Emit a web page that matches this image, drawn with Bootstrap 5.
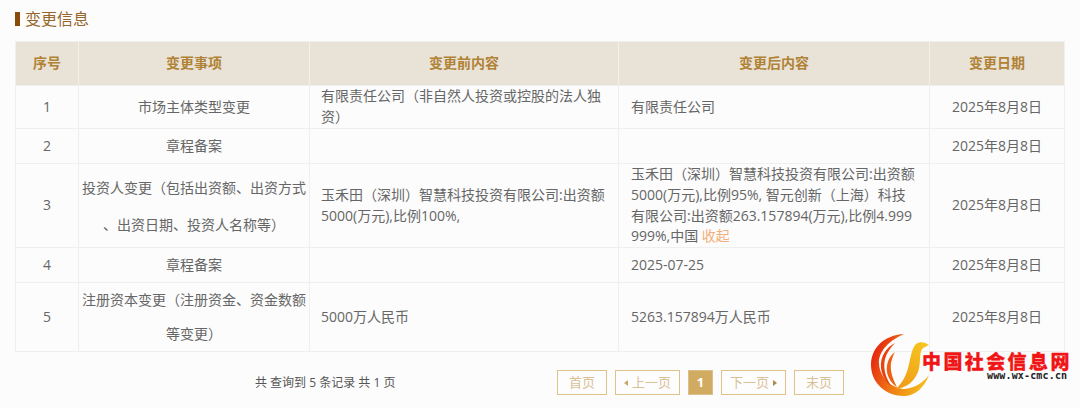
<!DOCTYPE html>
<html lang="zh">
<head>
<meta charset="utf-8">
<title>变更信息</title>
<link rel="stylesheet" href="https://cdn.jsdelivr.net/npm/bootstrap@5.3.0/dist/css/bootstrap.min.css">
<style>
html,body{height:408px;overflow:hidden}
body{background:#fcfcfc;color:#666;font-family:"Open Sans","Noto Sans CJK SC",sans-serif;font-size:14px;position:relative}
.page-wrap{padding:9px 15px 0}
.sec-title{display:flex;align-items:center;height:20px;margin:0 0 12px;color:#96672b;font-size:16px;font-weight:400;line-height:20px}
.sec-title::before{content:"";width:5px;height:14px;background:#8b4a08;margin-right:5px}
.chg-table{width:1049px;table-layout:fixed;margin:0;--bs-table-bg:transparent;--bs-table-color:#666;border-color:#efefef;font-size:14px;line-height:20.75px;word-break:break-all;line-break:anywhere}
.chg-table>thead>tr>th{background:#e9e2d7;color:#b08235;font-weight:700;text-align:center;vertical-align:middle;height:44px;padding:0 2px;border-color:#f3efe9;box-shadow:none}
.chg-table>tbody>tr>td{vertical-align:middle;padding:0 12px 0 12px;box-shadow:none}
.chg-table>tbody>tr>td.ctr{text-align:center;padding:0 3px}
.chg-table>tbody>tr>td.before-cell{padding-left:11px;padding-right:13px}
.chg-table>tbody>tr>td.lh37{line-height:37px}
.chg-table>tbody>tr>td.lh34{line-height:34px}
.c1{width:63px}.c2{width:231px}.c3{width:309px}.c4{width:311px}.c5{width:135px}
.h1r{height:43px}.h2r{height:35px}.h3r{height:84px}.h4r{height:35px}.h5r{height:69px}
.fold{color:#f6ae78;text-decoration:none}
.pager-row{display:flex;align-items:center;height:25px;margin-top:18px}
.pager-info{width:542px;padding-left:240px;color:#555;font-size:12px;white-space:nowrap}
.pgs{display:flex;gap:8px}
.pg{display:flex;align-items:center;justify-content:center;height:25px;border:1px solid #dfc288;color:#d8c194;font-size:13px;text-decoration:none;background:#fdfdfd}
.pg.w1{width:50px}.pg.w2{width:65px}.pg.on{width:25px;background:#d1ab62;border-color:#dcc08c;color:#fff;font-weight:700}
.tri-l,.tri-r{display:inline-block;width:0;height:0;border-top:3px solid transparent;border-bottom:3px solid transparent}
.tri-l{border-right:4px solid #c9a86c;margin-right:4px}
.tri-r{border-left:4px solid #a9894f;margin-left:4px}
.wm{position:absolute;left:868px;top:332px;width:208px;height:76px}
.wm-cn{position:absolute;left:54px;top:19px;color:#f01616;font-family:"Noto Sans CJK SC",sans-serif;font-size:19px;font-weight:900;line-height:20px;letter-spacing:2.4px;white-space:nowrap;-webkit-text-stroke:.3px #f01616}
.wm-url{position:absolute;left:119px;top:39px;color:#222;font-family:"DejaVu Sans Mono",monospace;font-size:10px;font-weight:700;line-height:10px;white-space:nowrap;letter-spacing:.15px}
.wm svg{position:absolute;left:0;top:0}
</style>
</head>
<body>
<div class="page-wrap">
  <h2 class="sec-title">变更信息</h2>
  <table class="table table-bordered chg-table">
    <colgroup><col class="c1"><col class="c2"><col class="c3"><col class="c4"><col class="c5"></colgroup>
    <thead>
      <tr><th>序号</th><th>变更事项</th><th>变更前内容</th><th>变更后内容</th><th>变更日期</th></tr>
    </thead>
    <tbody>
      <tr class="h1r"><td class="ctr">1</td><td class="ctr">市场主体类型变更</td><td class="before-cell">有限责任公司（非自然人投资或控股的法人独资）</td><td>有限责任公司</td><td class="ctr">2025年8月8日</td></tr>
      <tr class="h2r"><td class="ctr">2</td><td class="ctr">章程备案</td><td class="before-cell"></td><td></td><td class="ctr">2025年8月8日</td></tr>
      <tr class="h3r"><td class="ctr">3</td><td class="ctr lh37">投资人变更（包括出资额、出资方式、出资日期、投资人名称等）</td><td class="before-cell">玉禾田（深圳）智慧科技投资有限公司:出资额5000(万元),比例100%,</td><td>玉禾田（深圳）智慧科技投资有限公司:出资额5000(万元),比例95%, 智元创新（上海）科技有限公司:出资额263.157894(万元),比例4.999999%,中国 <a href="#" class="fold">收起</a></td><td class="ctr">2025年8月8日</td></tr>
      <tr class="h4r"><td class="ctr">4</td><td class="ctr">章程备案</td><td class="before-cell"></td><td>2025-07-25</td><td class="ctr">2025年8月8日</td></tr>
      <tr class="h5r"><td class="ctr">5</td><td class="ctr lh34">注册资本变更（注册资金、资金数额等变更）</td><td class="before-cell">5000万人民币</td><td>5263.157894万人民币</td><td class="ctr">2025年8月8日</td></tr>
    </tbody>
  </table>
  <div class="pager-row">
    <div class="pager-info">共 查询到 5 条记录 共 1 页</div>
    <div class="pgs">
      <a class="pg w1" href="#">首页</a>
      <a class="pg w2" href="#"><span class="tri-l"></span>上一页</a>
      <a class="pg on" href="#">1</a>
      <a class="pg w2" href="#">下一页<span class="tri-r"></span></a>
      <a class="pg w1" href="#">末页</a>
    </div>
  </div>
</div>
<div class="wm">
  <svg width="64" height="70" viewBox="0 0 64 70" aria-hidden="true">
    <defs>
      <linearGradient id="g1" gradientUnits="userSpaceOnUse" x1="3" y1="30" x2="55" y2="50"><stop offset="0" stop-color="#e62a10"/><stop offset=".45" stop-color="#ee7314"/><stop offset="1" stop-color="#f4b81c"/></linearGradient>
      <linearGradient id="g2" gradientUnits="userSpaceOnUse" x1="56" y1="12" x2="30" y2="58"><stop offset="0" stop-color="#f6c41e"/><stop offset="1" stop-color="#f09a18"/></linearGradient>
    </defs>
    <path d="M36 2C16 3 3 16 3 33 3 51 18 64 36 64 47 64 56 56 61 43 54 52 44 57 35 57 22 55 12 45 11 32 10 19 22 8 36 2Z" fill="url(#g1)"/>
    <path d="M27 11C18 16 12 24 13 36 14 44 18 50 23 54 17 44 15 36 17 27 19 20 23 15 27 11Z" fill="#e8420f"/>
    <path d="M27 20C21 24 18 32 19 40 20 46 24 52 29 55 24 46 22 38 23 31 24 27 25 23 27 20Z" fill="#ec6012"/>
    <path d="M61 13C57 10 52 9 48 12 44 16 43 24 41 32 39 42 35 50 28 57 38 56 46 50 50 40 53 32 51 22 54 17 56 15 59 14 61 13Z" fill="url(#g2)"/>
  </svg>
  <div class="wm-cn">中国社会信息网</div>
  <div class="wm-url">www.wx-cmc.cn</div>
</div>
</body>
</html>
